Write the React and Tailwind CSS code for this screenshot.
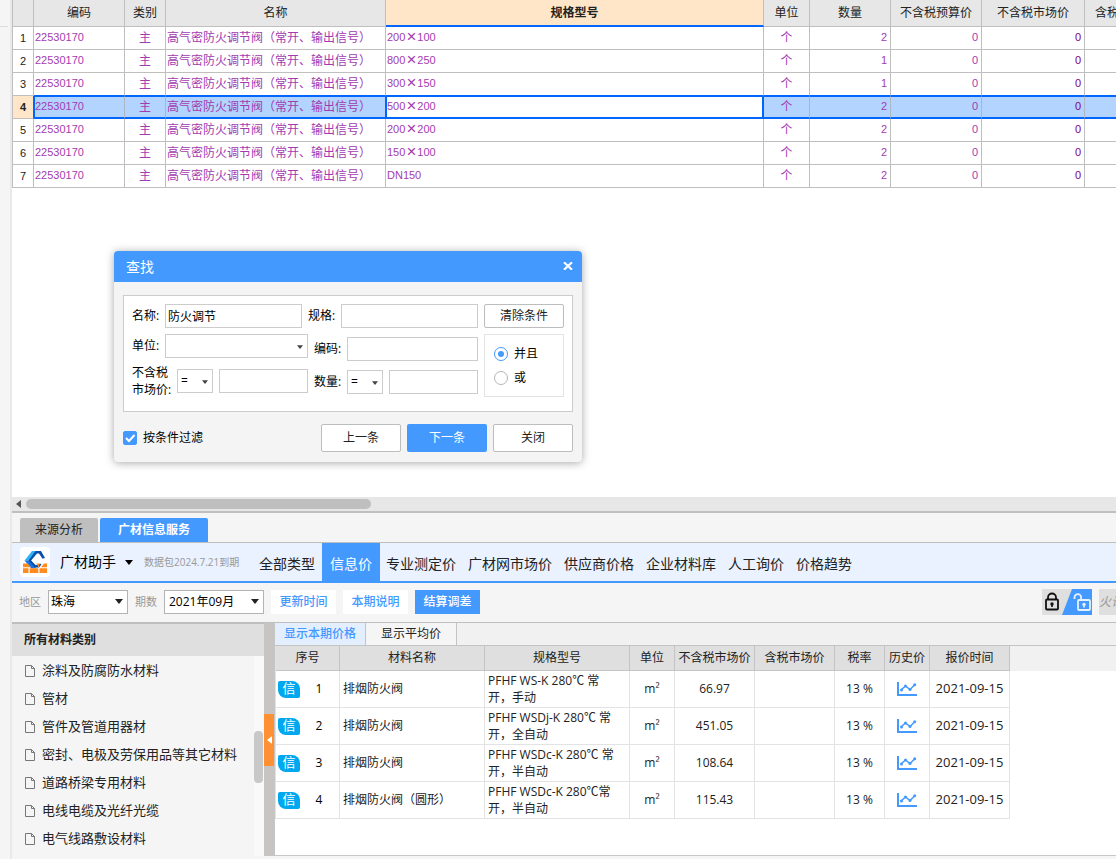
import React from "react";

const sheetColumns = [
  { label: "", width: "w-[21px]" },
  { label: "编码", width: "w-[91px]" },
  { label: "类别", width: "w-[41px]" },
  { label: "名称", width: "w-[220px]" },
  { label: "规格型号", width: "w-[378px]" },
  { label: "单位", width: "w-[46px]" },
  { label: "数量", width: "w-[81px]" },
  { label: "不含税预算价", width: "w-[91px]" },
  { label: "不含税市场价", width: "w-[103px]" },
  { label: "含税市场价", width: "w-[81px]" },
];

const sheetRows = [
  ["200×100", 2],
  ["800×250", 1],
  ["300×150", 1],
  ["500×200", 2],
  ["200×200", 2],
  ["150×100", 2],
  ["DN150", 2],
];

const SELECTED = 3;

function SpecText({ value }) {
  const [a, b] = value.split("×");
  return (
    <span className="flex h-4 items-center">
      {a}
      {b && <span className="w-3 text-center text-[17px] leading-4 font-light">×</span>}
      {b}
    </span>
  );
}

function Sheet() {
  return (
    <table className="w-[1154px] table-fixed border-separate border-spacing-0 border-l border-[#bfbfbf] text-xs text-[#a33bb0]">
      <thead>
        <tr className="h-[27px] text-[#222]">
          {sheetColumns.map((c, i) => (
            <th
              key={i}
              className={
                i === 4
                  ? c.width + " border-r border-b-2 border-r-[#bfbfbf] border-b-[#0066ff] bg-[#ffe6c8] p-0 font-bold"
                  : c.width + " border-r border-b border-[#bfbfbf] bg-[#e7e7e7] p-0 font-normal whitespace-nowrap"
              }
            >
              {c.label}
            </th>
          ))}
        </tr>
      </thead>
      <tbody>
        {sheetRows.map(([spec, qty], r) => {
          const sel = r === SELECTED;
          const base = sel
            ? "h-[23px] pt-0 leading-4 border-b-2 border-r border-b-[#0066ff] border-r-[#a9b7c9] bg-[#b3d4ff] "
            : r === SELECTED - 1
              ? "h-[23px] pt-0 leading-4 border-b border-r border-b-[#0066ff] border-r-[#bfbfbf] bg-white "
              : "h-[23px] pt-0 leading-4 border-b border-r border-[#bfbfbf] bg-white ";
          const selTop = sel ? "border-t border-t-[#0066ff] " : "";
          const text = base + selTop + "pb-0 ";
          const num = base + selTop + "pb-[2px] text-[11px] ";
          return (
            <tr key={r}>
              <td
                className={
                  sel
                    ? "h-[23px] border-r border-b border-r-[#0066ff] border-b-[#bfbfbf] bg-[#ffe6c8] p-0 text-center text-[11px] leading-4 font-bold text-[#222]"
                    : "h-[23px] border-r border-b border-[#bfbfbf] bg-white p-0 text-center text-[11px] leading-4 text-[#222]"
                }
              >
                {r + 1}
              </td>
              <td className={num + (sel ? "border-l border-l-[#0066ff] px-0" : "px-px")}>22530170</td>
              <td className={text + "px-0 text-center"}>主</td>
              <td className={(sel ? text.replace("border-r-[#a9b7c9]", "border-r-[#0066ff]") : text) + "px-px whitespace-nowrap"}>
                高气密防火调节阀（常开、输出信号）
              </td>
              <td
                className={
                  sel
                    ? "h-[23px] border-t border-r-2 border-b-2 border-l border-[#0066ff] bg-white px-0 pt-0 pb-[2px] text-[11px] leading-4"
                    : num + "px-px"
                }
              >
                <SpecText value={spec} />
              </td>
              <td className={text + "px-0 text-center"}>个</td>
              <td className={num + "pr-[3px] pl-0 text-right"}>{qty}</td>
              <td className={num + "pr-[3px] pl-0 text-right"}>0</td>
              <td className={num + "pr-[3px] pl-0 text-right text-[#800080]"}>0</td>
              <td className={text}></td>
            </tr>
          );
        })}
      </tbody>
    </table>
  );
}

function Caret({ className }) {
  return (
    <svg viewBox="0 0 8 5" className={className} aria-hidden="true">
      <path d="M0 0h8L4 5z" fill="currentColor" />
    </svg>
  );
}

const field = "h-6 border border-[#cccccc] bg-white text-xs text-black outline-none";
const textField = field + " w-0 min-w-0 flex-1 px-[2px]";

function SmallSelect({ id, label, options, className }) {
  return (
    <div className={"relative " + className}>
      <select id={id} aria-label={label} className={field + " block w-full appearance-none px-[3px]"}>
        {options.map((o) => (
          <option key={o}>{o}</option>
        ))}
      </select>
      <Caret className="pointer-events-none absolute top-[11px] right-[5px] h-[4px] w-[6px] text-[#444]" />
    </div>
  );
}

function FindDialog() {
  const button = "h-7 w-20 rounded-[2px] border border-[#bdbdbd] bg-white text-[#222]";
  return (
    <div
      role="dialog"
      aria-label="查找"
      className="absolute top-[251px] left-[102px] w-[468px] rounded bg-[#f4f4f4] text-xs text-black shadow-[0_1px_8px_rgba(0,0,0,0.35)]"
    >
      <div className="flex h-[31px] items-center justify-between rounded-t bg-[#4499ff] pr-[9px] pl-3 text-white">
        <h2 className="text-sm">查找</h2>
        <button aria-label="关闭窗口" className="p-0 pb-[2px]">
          <svg viewBox="0 0 10 8" className="block h-[8px] w-[10px]">
            <path d="M1 0.3L9 7.7M9 0.3L1 7.7" stroke="white" strokeWidth="2.2" />
          </svg>
        </button>
      </div>
      <form className="px-[9px] pt-[13px] pb-[10px]" onSubmit={(e) => e.preventDefault()}>
        <div className="flex flex-col gap-[6px] border border-[#cccccc] bg-white px-2 pt-2 pb-[13px] whitespace-nowrap">
          <div className="flex items-center gap-[6px]">
            <div className="flex min-w-0 flex-1 items-center">
              <label htmlFor="name" className="w-[33px]">名称:</label>
              <input id="name" defaultValue="防火调节" className={textField} />
            </div>
            <div className="flex min-w-0 flex-1 items-center">
              <label htmlFor="spec" className="w-[33px]">规格:</label>
              <input id="spec" className={textField} />
            </div>
            <button className="h-6 w-20 shrink-0 rounded-[2px] border border-[#bdbdbd] bg-white text-[#222]">清除条件</button>
          </div>
          <div className="flex items-start gap-[6px]">
            <div className="flex w-[176px] shrink-0 flex-col gap-[6px]">
              <div className="flex items-center">
                <label htmlFor="unit" className="w-[33px]">单位:</label>
                <SmallSelect id="unit" options={[""]} className="flex-1" />
              </div>
              <div className="flex items-center">
                <label htmlFor="price" className="w-[45px] leading-[17px]">
                  不含税
                  <br />
                  市场价:
                </label>
                <SmallSelect id="price-op" label="市场价比较" options={["="]} className="mr-[6px] w-9" />
                <input id="price" className={textField} />
              </div>
            </div>
            <div className="flex min-w-0 flex-1 flex-col gap-[9px] pt-[3px]">
              <div className="flex items-center">
                <label htmlFor="code" className="w-[33px]">编码:</label>
                <input id="code" className={textField} />
              </div>
              <div className="flex items-center">
                <label htmlFor="qty" className="w-[33px]">数量:</label>
                <SmallSelect id="qty-op" label="数量比较" options={["="]} className="mr-[6px] w-9" />
                <input id="qty" className={textField} />
              </div>
            </div>
            <div className="flex h-[63px] w-20 shrink-0 flex-col justify-center gap-[6px] border border-[#e3e3e3] pl-[9px]">
              {["并且", "或"].map((t, i) => (
                <label key={t} className="flex h-[18px] items-center gap-[6px]">
                  <input
                    type="radio"
                    name="logic"
                    defaultChecked={i === 0}
                    className="grid size-[14px] shrink-0 appearance-none place-content-center rounded-full border border-[#b5b5b5] bg-white checked:border-[#4499ff] checked:before:size-[6px] checked:before:rounded-full checked:before:bg-[#4499ff]"
                  />
                  {t}
                </label>
              ))}
            </div>
          </div>
        </div>
        <div className="mt-3 flex items-center gap-[6px]">
          <label className="mr-auto flex items-center gap-[6px]">
            <span className="relative size-[14px]">
              <input type="checkbox" defaultChecked className="block size-[14px] appearance-none rounded-[2px] border border-[#b5b5b5] bg-white checked:border-[#4499ff] checked:bg-[#4499ff]" />
              <svg viewBox="0 0 14 14" className="pointer-events-none absolute inset-0 size-[14px]">
                <path d="M3 7l3 3 5.5-6" fill="none" stroke="white" strokeWidth="2" />
              </svg>
            </span>
            按条件过滤
          </label>
          <button className={button}>上一条</button>
          <button className="h-7 w-20 rounded-[2px] bg-[#4499ff] text-white">下一条</button>
          <button className={button}>关闭</button>
        </div>
      </form>
    </div>
  );
}

function Logo() {
  return (
    <svg viewBox="0 0 30 30" className="size-[30px]" role="img" aria-label="广材助手">
      <rect width="30" height="30" rx="4" fill="white" />
      <path d="M12 4h7L11 13.500H4.500z" fill="#2fb4f8" />
      <path d="M4.500 13.500H11L16.500 20 14 21.500 11 21z" fill="#1a73e0" />
      <path d="M15.500 4H21L25 11l-2.500.8L19 6.500h-2.200L11 13.500 15.500 18h3L20 16.500l1.500 1L19 20.500h-4L8.500 13.500z" fill="#0d4fa8" />
      <g fill="#ff8a1e">
        <path d="M3 16.500h4.500l3.500 3.700H3zM3 21.300h5.500V26H3zM9.700 21.300h8.600V26H9.700zM19.500 21.300H27V26h-7.500zM16.500 16.500h2.800v3.700h-1zM21 20.200l3-3.700h3v3.700z" />
      </g>
    </svg>
  );
}

const navItems = ["专业测定价", "广材网市场价", "供应商价格", "企业材料库", "人工询价", "价格趋势"];

function ServiceNav() {
  return (
    <nav className="flex h-[40px] items-stretch border-b-2 border-[#4499ff] bg-[#eaf1ff] pl-2 text-sm whitespace-nowrap text-[#222]">
      <div className="flex items-center">
        <Logo />
        <button className="ml-[10px] flex items-center gap-[9px] text-black">
          广材助手
          <Caret className="h-[5px] w-[8px]" />
        </button>
        <span className="ml-[11px] w-[109px] text-[10px] text-[#999]">数据包2024.7.21到期</span>
      </div>
      <a href="#all" className="flex items-center px-[6px] pt-1">全部类型</a>
      <a href="#info" className="ml-px flex items-center bg-[#4499ff] px-2 pt-1 text-white">信息价</a>
      {navItems.map((t) => (
        <a key={t} href={"#" + t} className="flex items-center px-[6px] pt-1">
          {t}
        </a>
      ))}
    </nav>
  );
}

function LockSwitch() {
  return (
    <button aria-label="锁定切换" className="ml-auto">
      <svg viewBox="0 0 50 26" className="block h-[26px] w-[50px]">
        <rect width="50" height="26" fill="#dfdfdf" />
        <path d="M30 0H50V26H20z" fill="#4499ff" />
        <path d="M6 10V8.500a4 4 0 0 1 8 0V10" fill="none" stroke="#111" strokeWidth="1.800" />
        <rect x="4" y="10.500" width="12" height="10" rx="1" fill="none" stroke="#111" strokeWidth="1.800" />
        <path d="M10 18v-2" stroke="#111" strokeWidth="1.600" />
        <circle cx="10" cy="15" r="1.700" fill="#111" />
        <path d="M32.500 10V8.500a3.300 3.300 0 0 1 6.600 0V11" fill="none" stroke="#e6f1ff" strokeWidth="1.800" />
        <rect x="36" y="11" width="12" height="10" rx="1" fill="none" stroke="#e6f1ff" strokeWidth="1.800" />
        <path d="M42 18.500v-2" stroke="#e6f1ff" strokeWidth="1.600" />
        <circle cx="42" cy="15.500" r="1.700" fill="#e6f1ff" />
      </svg>
    </button>
  );
}

function FilterBar() {
  const box = "block h-6 w-full appearance-none border border-[#b3b3b3] bg-white text-xs text-black outline-none";
  return (
    <div className="flex h-[39px] items-center overflow-hidden pb-px pl-[7px] text-xs whitespace-nowrap">
      <label htmlFor="region" className="w-[29px] text-[11px] text-[#999]">地区</label>
      <div className="relative mr-[7px] w-20">
        <select id="region" className={box + " px-[2px]"}>
          <option>珠海</option>
        </select>
        <Caret className="pointer-events-none absolute top-[9px] right-[5px] h-[5px] w-[8px] text-[#222]" />
      </div>
      <label htmlFor="period" className="w-[29px] text-[11px] text-[#999]">期数</label>
      <div className="relative mr-[7px] w-[100px]">
        <select id="period" className={box + " px-1"}>
          <option>2021年09月</option>
        </select>
        <Caret className="pointer-events-none absolute top-[9px] right-[5px] h-[5px] w-[8px] text-[#222]" />
      </div>
      <div className="flex gap-[7px]">
        <button className="h-6 w-[65px] bg-white font-medium text-[#4499ff]">更新时间</button>
        <button className="h-6 w-[65px] bg-white font-medium text-[#4499ff]">本期说明</button>
        <button className="h-6 w-[65px] bg-[#4499ff] font-medium text-white">结算调差</button>
      </div>
      <LockSwitch />
      <span className="ml-[7px] flex h-[26px] w-[17px] items-center overflow-hidden bg-[#dfdfdf] text-xs text-[#999] italic">火记</span>
    </div>
  );
}

const categories = [
  "涂料及防腐防水材料",
  "管材",
  "管件及管道用器材",
  "密封、电极及劳保用品等其它材料",
  "道路桥梁专用材料",
  "电线电缆及光纤光缆",
  "电气线路敷设材料",
];

function CategoryPanel() {
  return (
    <aside className="flex w-[252px] shrink-0 flex-col border-t border-[#bfbfbf]">
      <h3 className="flex h-8 items-center bg-[#dfdfdf] pl-3 text-xs font-bold text-[#222]">所有材料类别</h3>
      <div className="flex flex-1">
        <ul className="flex-1 pt-px pb-[3px] text-[13px] whitespace-nowrap text-[#222]">
          {categories.map((c) => (
            <li key={c} className="flex h-7 items-center gap-[7px] pl-[13px]">
              <svg viewBox="0 0 10 12" className="h-[12px] w-[10px]">
                <path d="M.5.5h6l3 3v8h-9zM6.500.5v3h3" fill="none" stroke="#777" />
              </svg>
              {c}
            </li>
          ))}
        </ul>
        <div className="w-[10px] bg-[#f9f9f9] pt-[75px]">
          <div className="h-[52px] w-[9px] rounded-[4px] bg-[#c8c8c8]" />
        </div>
      </div>
    </aside>
  );
}

const priceColumns = [
  ["序号", "w-16"],
  ["材料名称", "w-[145px]"],
  ["规格型号", "w-[145px]"],
  ["单位", "w-[45px]"],
  ["不含税市场价", "w-20"],
  ["含税市场价", "w-20"],
  ["税率", "w-[50px]"],
  ["历史价", "w-[45px]"],
  ["报价时间", "w-20"],
];

const prices = [
  ["排烟防火阀", "PFHF WS-K 280℃ 常", "开，手动", "66.97"],
  ["排烟防火阀", "PFHF WSDj-K 280℃ 常", "开，全自动", "451.05"],
  ["排烟防火阀", "PFHF WSDc-K 280℃ 常", "开，半自动", "108.64"],
  ["排烟防火阀（圆形）", "PFHF WSDc-K 280℃常", "开，半自动", "115.43"],
];

function TrendIcon() {
  return (
    <svg viewBox="0 0 20 14" className="h-[14px] w-[20px]">
      <path d="M1 0v13h19" fill="none" stroke="#4499ff" strokeWidth="2" />
      <path d="M4 8l4.500-4L13 7.500 18 2.500" fill="none" stroke="#4499ff" strokeWidth="1.500" />
      <g fill="#4499ff">
        <circle cx="4.500" cy="8" r="1.500" />
        <circle cx="8.500" cy="4" r="1.500" />
        <circle cx="13" cy="7.500" r="1.500" />
        <circle cx="17.700" cy="2.700" r="1.500" />
      </g>
    </svg>
  );
}

function PricePanel() {
  const cell = "border-r border-b border-[#e3e3e3] p-0 text-center";
  return (
    <section className="min-w-0 flex-1 border-b border-[#c8c8c8] bg-white">
      <div className="flex h-[23px] border-b border-[#c4c4c4] bg-[#f1f1f1] text-xs">
        <button className="w-[91px] border-r border-[#c4c4c4] bg-[#e3eeff] font-medium text-[#4499ff]">显示本期价格</button>
        <button className="w-[91px] border-r border-[#c4c4c4] bg-[#f5f5f5] text-[#222]">显示平均价</button>
      </div>
      <div className="bg-[linear-gradient(#f1f1f1_25px,#fff_25px)]">
        <table className="w-[735px] table-fixed border-separate border-spacing-0 border-l border-[#e3e3e3] text-xs text-[#222]">
          <thead>
            <tr className="h-[25px]">
              {priceColumns.map(([t, w]) => (
                <th key={t} className={w + " border-r border-b border-[#c4c4c4] bg-[#dfdfdf] p-0 font-normal whitespace-nowrap"}>
                  {t}
                </th>
              ))}
            </tr>
          </thead>
          <tbody>
            {prices.map(([name, line1, line2, price], i) => (
              <tr key={i} className="h-[37px]">
                <td className={cell}>
                  <div className="flex items-center pl-[2px] text-black">
                    <span className="flex h-[17px] w-[22px] items-center justify-center rounded-[2px] rounded-tr-lg rounded-bl-lg bg-[#00a8f0] text-[13px] text-white">信</span>
                    <span className="w-[38px] text-center">{i + 1}</span>
                  </div>
                </td>
                <td className="border-r border-b border-[#e3e3e3] px-[3px] py-0">{name}</td>
                <td className="border-r border-b border-[#e3e3e3] px-[3px] py-0 leading-[17px] whitespace-nowrap">
                  {line1}
                  <br />
                  {line2}
                </td>
                <td className={cell}>m²</td>
                <td className={cell}>{price}</td>
                <td className={cell}></td>
                <td className={cell}>13 %</td>
                <td className={cell}>
                  <button aria-label="历史价" className="block w-full">
                    <span className="flex justify-center">
                      <TrendIcon />
                    </span>
                  </button>
                </td>
                <td className={cell + " text-[13px]"}>2021-09-15</td>
              </tr>
            ))}
          </tbody>
        </table>
      </div>
    </section>
  );
}

export default function App() {
  return (
    <div className="flex min-h-screen bg-[#f5f5f5] font-['Open_Sans','Noto_Sans_CJK_SC',sans-serif]">
      <div className="w-3 shrink-0 border-r-2 border-[#e9e9e9]">
        <div className="h-[27px] w-2 border-b border-[#dcdcdc]" />
      </div>
      <div className="flex min-w-0 flex-1 flex-col">
        <main className="relative flex-1 overflow-hidden bg-white">
          <div className="font-['Liberation_Sans','Noto_Sans_CJK_SC',sans-serif]">
            <Sheet />
          </div>
          <FindDialog />
        </main>
        <div className="flex h-4 items-start border-b-2 border-[#bfbfbf] bg-[#e7e7e7] pt-[2px] pl-1">
          <svg viewBox="0 0 5 8" className="mt-px mr-[5px] h-[8px] w-[5px]">
            <path d="M5 0v8L0 4z" fill="#555" />
          </svg>
          <div className="h-[10px] w-[345px] rounded-full bg-[#bfbfbf]" />
        </div>
        <div className="flex items-end gap-[2px] border-b border-[#bfbfbf] pt-[5px] pl-2 text-xs">
          <button className="h-6 w-[78px] rounded-t-[2px] bg-[#bfbfbf] text-[#222]">来源分析</button>
          <button className="h-6 w-[108px] rounded-t-[2px] bg-[#4499ff] font-bold text-white">广材信息服务</button>
        </div>
        <ServiceNav />
        <FilterBar />
        <div className="flex border-t border-[#bfbfbf]">
          <CategoryPanel />
          <div className="w-[11px] shrink-0 bg-[#c6c5c4] pt-[91px]">
            <button aria-label="收起面板" className="flex h-[52px] w-[10px] items-center justify-center bg-[#ff9033]">
              <svg viewBox="0 0 5 8" className="h-[8px] w-[5px]">
                <path d="M5 0v8L0 4z" fill="white" />
              </svg>
            </button>
          </div>
          <PricePanel />
        </div>
        <div className="h-[3px]" />
      </div>
    </div>
  );
}
